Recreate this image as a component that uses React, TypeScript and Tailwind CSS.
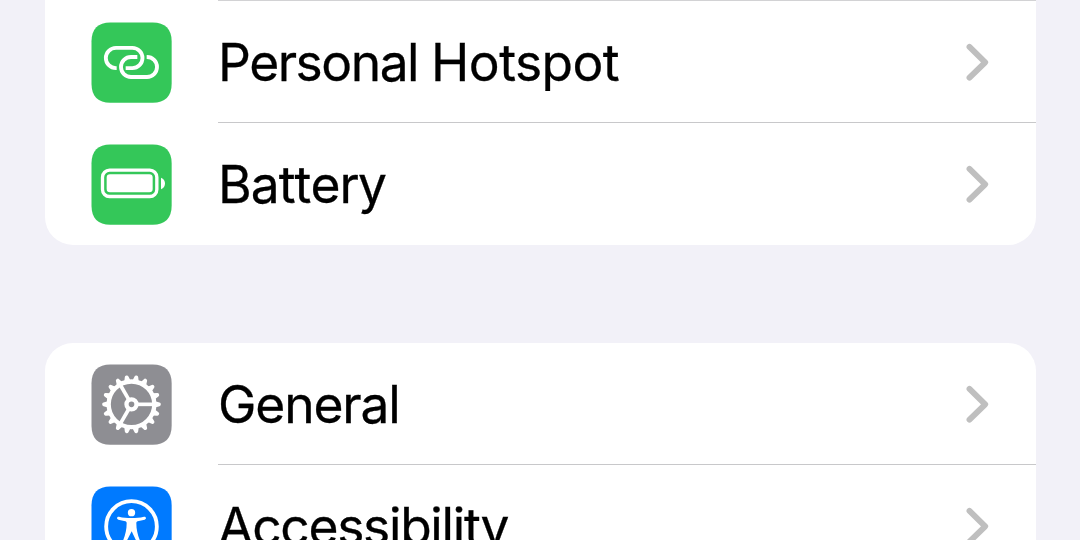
import type { ReactNode } from "react";

function Tile({ color, children }: { color: string; children: ReactNode }) {
  return (
    <svg viewBox="0 0 288 288" className="mt-px ml-[39.5px] size-24 shrink-0" fill="none" aria-hidden="true">
      <path
        fill={color}
        d="M79 22.500H206C243 22.500 263 42 263 79V206C263 243 243 263 206 263H79C42 263 22.500 243 22.500 206V79C22.500 42 42 22.500 79 22.500Z"
      />
      {children}
    </svg>
  );
}

function HotspotIcon() {
  return (
    <Tile color="#34c759">
      <g stroke="#fff" strokeWidth="11.500">
        <path d="M98 159.500H96A30.500 30.500 0 0 1 96 98.500H145A30.500 30.500 0 0 1 145 159.500H125" />
        <path d="M160 126H141A30 30 0 0 0 141 186H189A30 30 0 0 0 189 126H188" />
      </g>
    </Tile>
  );
}

function BatteryIcon() {
  return (
    <Tile color="#34c759">
      <rect x="55.500" y="99.500" width="163" height="79" rx="21" stroke="#fff" strokeWidth="10" />
      <rect x="68" y="112" width="138" height="54" rx="10" fill="#fff" />
      <path fill="#fff" d="M231 122C239 125 243 132 243 139.500S239 154 231 157Z" />
    </Tile>
  );
}

const TEETH = Array.from({ length: 18 }, (_, i) => i * 20);

function GeneralIcon() {
  return (
    <Tile color="#8e8e93">
      <g transform="translate(142.500 142)">
        <circle r="68.500" stroke="#fff" strokeWidth="13" />
        {TEETH.map((a) => (
          <path key={a} transform={`rotate(${a})`} fill="#fff" d="M71 -9.500L84 -5.500Q88 -4.500 88 0T84 5.500L71 9.500Z" />
        ))}
        {[0, 120, 240].map((a) => (
          <path key={a} transform={`rotate(${a})`} stroke="#fff" strokeWidth="11" d="M17 0H66" />
        ))}
        <circle r="15" stroke="#fff" strokeWidth="13" />
      </g>
    </Tile>
  );
}

function AccessibilityIcon() {
  return (
    <Tile color="#007aff">
      <circle cx="142.500" cy="142.500" r="76" stroke="#fff" strokeWidth="11.500" />
      <circle cx="142.500" cy="101" r="11" fill="#fff" />
      <path
        fill="#fff"
        d="M105 113C117 116 129 117 142.500 117S168 116 180 113C187 112 188 120 182 122L161 127C158 128 157 130 157 133C157 152 161 168 168 185C170 191 161 194 158 188L143 157L127 188C124 194 115 191 117 185C124 168 128 152 128 133C128 130 127 128 124 127L103 122C97 120 98 112 105 113Z"
      />
    </Tile>
  );
}

function Chevron() {
  return (
    <svg viewBox="0 0 24 40" className="mr-[47px] h-10 w-6 shrink-0" fill="none" aria-hidden="true">
      <path d="M4.500 4.900L20.200 20.300L4.500 35.700" stroke="#bfbfbf" strokeWidth="5.900" strokeLinecap="round" strokeLinejoin="round" />
    </svg>
  );
}

interface RowProps {
  icon: ReactNode;
  label: ReactNode;
  labelClass: string;
  divider?: string;
}

function Row({ icon, label, labelClass, divider = "" }: RowProps) {
  return (
    <li className="flex h-[122px] items-center">
      {icon}
      <div className={`ml-[38px] flex h-full flex-1 items-center justify-between ${divider}`}>
        <span className={`whitespace-nowrap ${labelClass}`}>{label}</span>
        <Chevron />
      </div>
    </li>
  );
}

export default function App() {
  return (
    <main className="flex h-[540px] w-[1080px] flex-col overflow-hidden bg-[#f2f1f8] pr-[44.500px] pl-[44.500px] font-['Inter',sans-serif] text-[51.500px] leading-[64px] text-black [-webkit-text-stroke:0.3px_black]">
      <ul className="shrink-0 rounded-b-[28px] bg-white pt-px">
        <Row
          icon={<HotspotIcon />}
          label={
            <>
              Personal <span className="tracking-[-0.55px]">Hotspot</span>
            </>
          }
          labelClass="tracking-[-1.48px]"
          divider="shadow-[0_-1px_0_#d2d2d4]"
        />
        <Row icon={<BatteryIcon />} label="Battery" labelClass="tracking-[-0.95px] [font-kerning:none]" divider="shadow-[0_-1px_0_#c8c8ca]" />
      </ul>
      <ul className="mt-[98px] shrink-0 rounded-t-[28px] bg-white">
        <Row icon={<GeneralIcon />} label="General" labelClass="tracking-[-1.15px]" />
        <Row icon={<AccessibilityIcon />} label="Accessibility" labelClass="tracking-[-1.3px]" divider="shadow-[0_-1px_0_#c8c8ca]" />
      </ul>
    </main>
  );
}
